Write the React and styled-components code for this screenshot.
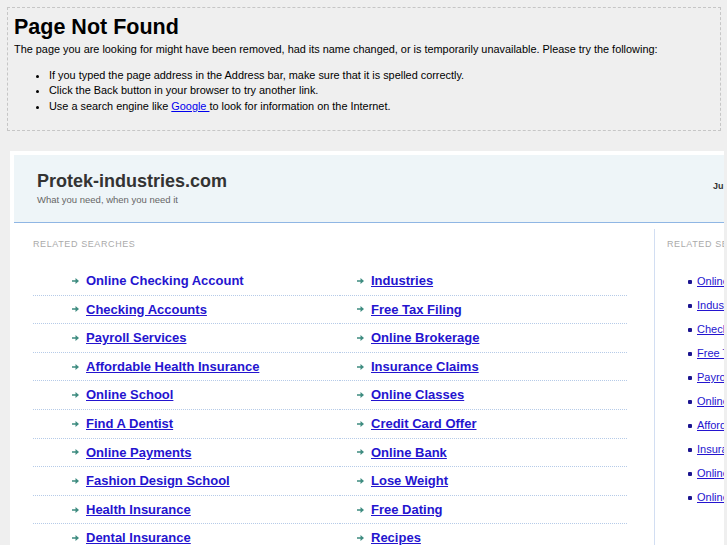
import React from 'react';
import styled, { createGlobalStyle } from 'styled-components';

const GlobalStyle = createGlobalStyle`
  html, body {
    margin: 0;
    padding: 0;
    background: #efefef;
    overflow: hidden;
  }
  body {
    font-family: 'Liberation Sans', Arial, sans-serif;
  }
`;

const ErrorBox = styled.div`
  margin: 7px 6px 0 7px;
  border: 1px dashed #c6c6c6;
  padding: 6px 6px 16px 6px;
  color: #000;
`;

const ErrorTitle = styled.h1`
  margin: 0;
  font-size: 21.5px;
  font-weight: bold;
  line-height: 26px;
`;

const ErrorText = styled.p`
  margin: 1.5px 0 0;
  font-size: 10.9px;
  line-height: 15px;
`;

const ErrorList = styled.ul`
  margin: 11px 0 0;
  padding-left: 35px;
  font-size: 10.9px;
  line-height: 15.5px;
`;

const GoogleLink = styled.a`
  color: #0000ee;
  text-decoration: underline;
`;

const Frame = styled.div`
  margin: 20px 3px 0 10px;
  height: 400px;
  background: #fff;
  overflow: hidden;
  padding: 4px 0 0 4px;
`;

const Page = styled.div`
  width: 960px;
`;

const Header = styled.div`
  display: grid;
  grid-template-columns: 676px auto;
  align-items: start;
  height: 67px;
  padding-left: 23px;
  background: #eef5f8;
  border-bottom: 1px solid #8fb6e4;
`;

const Brand = styled.div`
  padding-top: 15px;
`;

const SiteName = styled.div`
  font-size: 18px;
  font-weight: bold;
  color: #333;
  line-height: 22px;
`;

const Tagline = styled.div`
  margin-top: 2px;
  font-size: 9.5px;
  color: #666;
  line-height: 12px;
`;

const DateLabel = styled.div`
  padding-top: 26px;
  font-size: 9px;
  font-weight: bold;
  color: #333;
`;

const Body = styled.div`
  display: flex;
  align-items: flex-start;
`;

const Main = styled.div`
  width: 621px;
  padding: 16px 0 0 19px;
`;

const SectionLabel = styled.div`
  font-size: 9px;
  line-height: 11px;
  letter-spacing: 0.6px;
  color: #aaa;
  text-transform: uppercase;
`;

const Columns = styled.div`
  display: flex;
  margin-top: 17px;
`;

const LinkColumn = styled.ul`
  list-style: none;
  margin: 0;
  padding: 0;
  width: ${(p) => p.$width}px;
`;

const LinkRow = styled.li`
  display: flex;
  align-items: center;
  line-height: 27.6px;
  padding-left: ${(p) => p.$indent}px;
  border-bottom: 1px dotted #b6cbe8;
`;

const Arrow = styled.svg`
  width: 7px;
  height: 6px;
  margin-right: 7px;
  flex: none;
`;

const MainLink = styled.a`
  font-size: 13px;
  font-weight: bold;
  color: #2414cf;
  text-decoration: ${(p) => (p.$plain ? 'none' : 'underline')};
`;

const Sidebar = styled.div`
  margin-top: 6px;
  border-left: 1px solid #d2def2;
  padding: 10px 0 0 12px;
  height: 400px;
`;

const SideList = styled.ul`
  margin: 19px 0 0;
  padding: 0;
  list-style: none;
`;

const SideItem = styled.li`
  display: flex;
  align-items: center;
  font-size: 11px;
  line-height: 24px;
`;

const Bullet = styled.span`
  width: 4px;
  height: 4px;
  border-radius: 1px;
  background: #1c1590;
  margin: 1px 5px 0 21px;
  flex: none;
`;

const SideLink = styled.a`
  color: #2414cf;
  text-decoration: underline;
`;

const leftLinks = [
  'Online Checking Account',
  'Checking Accounts',
  'Payroll Services',
  'Affordable Health Insurance',
  'Online School',
  'Find A Dentist',
  'Online Payments',
  'Fashion Design School',
  'Health Insurance',
  'Dental Insurance',
];

const rightLinks = [
  'Industries',
  'Free Tax Filing',
  'Online Brokerage',
  'Insurance Claims',
  'Online Classes',
  'Credit Card Offer',
  'Online Bank',
  'Lose Weight',
  'Free Dating',
  'Recipes',
];

const sideLinks = [
  'Online Checking Account',
  'Industries',
  'Checking Accounts',
  'Free Tax Filing',
  'Payroll Services',
  'Online Brokerage',
  'Affordable Health Insurance',
  'Insurance Claims',
  'Online School',
  'Online Classes',
];

function ArrowIcon() {
  return (
    <Arrow viewBox="0 0 7 6">
      <path d="M0 2.2h3.5V0L7 3 3.5 6V3.8H0z" fill="#3e8c80" />
    </Arrow>
  );
}

function Column({ items, width, indent, plainFirst }) {
  return (
    <LinkColumn $width={width}>
      {items.map((item, i) => (
        <LinkRow key={item} $indent={indent}>
          <ArrowIcon />
          <MainLink href="#" $plain={plainFirst && i === 0}>
            {item}
          </MainLink>
        </LinkRow>
      ))}
    </LinkColumn>
  );
}

export default function App() {
  return (
    <>
      <GlobalStyle />
      <ErrorBox>
        <ErrorTitle>Page Not Found</ErrorTitle>
        <ErrorText>
          The page you are looking for might have been removed, had its name changed, or is temporarily unavailable. Please try the following:
        </ErrorText>
        <ErrorList>
          <li>If you typed the page address in the Address bar, make sure that it is spelled correctly.</li>
          <li>Click the Back button in your browser to try another link.</li>
          <li>
            Use a search engine like <GoogleLink href="#">Google </GoogleLink> to look for information on the Internet.
          </li>
        </ErrorList>
      </ErrorBox>

      <Frame>
        <Page>
          <Header>
            <Brand>
              <SiteName>Protek-industries.com</SiteName>
              <Tagline>What you need, when you need it</Tagline>
            </Brand>
            <DateLabel>Ju</DateLabel>
          </Header>
          <Body>
            <Main>
              <SectionLabel>Related Searches</SectionLabel>
              <Columns>
                <Column items={leftLinks} width={307} indent={39} plainFirst />
                <Column items={rightLinks} width={287} indent={17} />
              </Columns>
            </Main>
            <Sidebar>
              <SectionLabel>Related Searches</SectionLabel>
              <SideList>
                {sideLinks.map((item) => (
                  <SideItem key={item}>
                    <Bullet />
                    <SideLink href="#">{item}</SideLink>
                  </SideItem>
                ))}
              </SideList>
            </Sidebar>
          </Body>
        </Page>
      </Frame>
    </>
  );
}
